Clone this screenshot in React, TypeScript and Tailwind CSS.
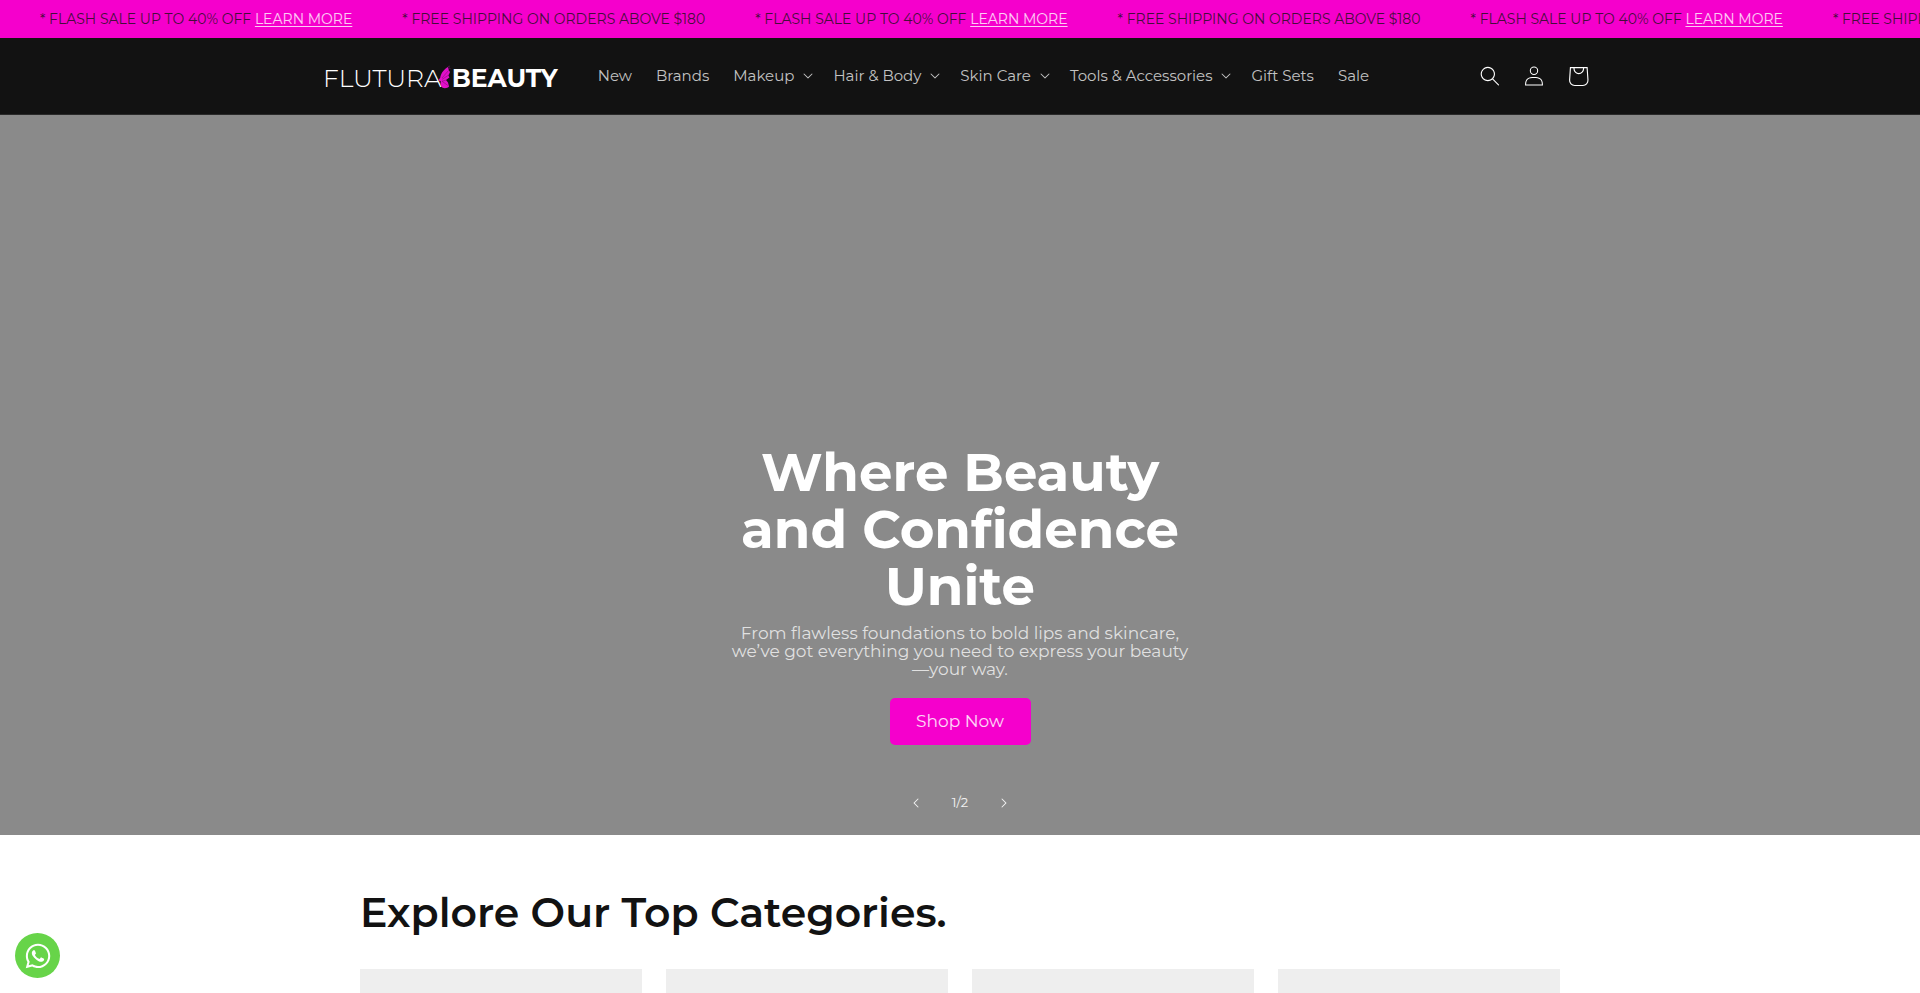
import { FaWhatsapp } from "react-icons/fa";

const menu = [
  { label: "New" },
  { label: "Brands" },
  { label: "Makeup", sub: true },
  { label: "Hair & Body", sub: true },
  { label: "Skin Care", sub: true },
  { label: "Tools & Accessories", sub: true },
  { label: "Gift Sets" },
  { label: "Sale" },
];

function Caret({ className }: { className: string }) {
  return (
    <svg viewBox="0 0 10 6" fill="currentColor" className={className} aria-hidden="true">
      <path
        fillRule="evenodd"
        clipRule="evenodd"
        d="M9.354.646a.5.5 0 00-.708 0L5 4.293 1.354.646a.5.5 0 00-.708.708l4 4a.5.5 0 00.708 0l4-4a.5.5 0 000-.708z"
      />
    </svg>
  );
}

function Ticker() {
  return (
    <div className="flex h-[38px] items-center gap-[50px] overflow-hidden bg-[#f500cc] pl-10 text-sm whitespace-nowrap text-[#121212]/80">
      {[0, 1, 2].map((n) => (
        <div key={n} className="flex shrink-0 gap-[50px]">
          <p>
            * FLASH SALE UP TO 40% OFF{" "}
            <a href="#sale" className="text-white/80 underline underline-offset-2">
              LEARN MORE
            </a>
          </p>
          <p>* FREE SHIPPING ON ORDERS ABOVE $180</p>
        </div>
      ))}
    </div>
  );
}

function Logo() {
  return (
    <a href="#home" className="flex items-center pt-[6px] pl-[3px] text-[25px] text-white" aria-label="Flutura Beauty">
      <span className="font-light">FLUTURA</span>
      <svg viewBox="0 0 14 24" className="-ml-1 mb-1 h-6 w-[14px]" aria-hidden="true">
        <path
          d="M10 2C6.500 4 3 7.500 2.200 12.800L.6 15C1.200 16 2.200 16.400 3 16.200C2 18.500 2.600 21.500 4.600 22.800C7 23.600 9.800 23 11 21.500L10 17.500L8 15L11.400 12.600L10.400 10.400L12 7L10.800 5.200Z"
          fill="#e010c8"
        />
        <path d="M10.500 5.500L4 13M10.200 10.400L4 14.400M8 15L4 16.300L10 20.500" stroke="#7c0b70" strokeWidth=".5" fill="none" />
        <path d="M10 2Q10.500.8 12 1.200M10.500 3Q12 2.500 12.200 3.800" stroke="#8b1380" strokeWidth=".6" fill="none" />
      </svg>
      <span className="font-bold">BEAUTY</span>
    </a>
  );
}

function Header() {
  return (
    <header className="border-b border-[#2a2a2a] bg-[#121212]">
      <div className="mx-auto flex h-[76px] max-w-[1280px] items-center">
        <Logo />
        <nav className="ml-7 flex flex-1 items-center whitespace-nowrap">
          {menu.map((item) =>
            item.sub ? (
              <button key={item.label} type="button" className="flex items-center gap-[9px] pr-2 pl-3 text-[15px] text-white/75">
                {item.label}
                <Caret className="w-[10px]" />
              </button>
            ) : (
              <a key={item.label} href="#menu" className="px-3 text-[15px] text-white/75">
                {item.label}
              </a>
            ),
          )}
        </nav>
        <div className="flex text-white">
          <button type="button" aria-label="Search" className="flex size-11 items-center justify-center">
            <svg viewBox="0 0 18 19" className="size-5" fill="currentColor">
              <path
                fillRule="evenodd"
                clipRule="evenodd"
                d="M11.03 11.68A5.784 5.784 0 112.85 3.5a5.784 5.784 0 018.18 8.18zm.26 1.12a6.78 6.78 0 11.72-.7l5.4 5.4a.5.5 0 11-.71.7l-5.41-5.4z"
              />
            </svg>
          </button>
          <a href="#account" aria-label="Log in" className="flex size-11 items-center justify-center">
            <svg viewBox="0 0 18 19" className="size-5" fill="currentColor">
              <path
                fillRule="evenodd"
                clipRule="evenodd"
                d="M6 4.500a3 3 0 116 0 3 3 0 01-6 0zm3-4a4 4 0 100 8 4 4 0 000-8zm5.580 12.150c1.120.82 1.830 2.240 1.910 4.850H1.510c.08-2.600.79-4.030 1.900-4.850C4.660 11.750 6.500 11.500 9 11.500s4.350.26 5.580 1.150zM9 10.500c-2.500 0-4.650.24-6.170 1.350C1.270 12.980.5 14.930.5 18v.5h17V18c0-3.070-.77-5.020-2.330-6.150-1.520-1.100-3.670-1.350-6.170-1.350z"
              />
            </svg>
          </a>
          <a href="#cart" aria-label="Cart" className="flex size-11 items-center justify-center">
            <svg viewBox="10 10 20.500 20.500" className="size-[23px]" fill="currentColor">
              <path
                fillRule="evenodd"
                d="M15.750 11.800h-3.160l-.77 11.600a5 5 0 0 0 4.990 5.340h7.380a5 5 0 0 0 4.990-5.330L28.400 11.800zm0 1h-2.220l-.71 10.670a4 4 0 0 0 3.990 4.270h7.380a4 4 0 0 0 4-4.270l-.72-10.670h-2.220v.63a4.750 4.750 0 1 1-9.500 0zm8.500 0h-7.500v.63a3.750 3.750 0 1 0 7.500 0z"
              />
            </svg>
          </a>
        </div>
      </div>
    </header>
  );
}

function Hero() {
  return (
    <section className="flex h-[720px] flex-col items-center justify-end bg-[#8a8a8a] text-center">
      <h1 className="w-[472px] text-[53px] leading-[57px] font-bold text-white">Where Beauty and Confidence Unite</h1>
      <p className="mt-[9px] w-[472px] text-[17px] leading-[18px] text-white/75">
        From flawless foundations to bold lips and skincare, we’ve got everything you need to express your beauty
        <wbr />
        <span className="inline-block">—your way.</span>
      </p>
      <a
        href="#shop"
        className="mt-5 flex h-[47px] w-[141px] items-center justify-center rounded-[5px] bg-[#f500cc] text-[17px] text-white/85"
      >
        Shop Now
      </a>
      <div className="mt-9 mb-[10px] flex items-center text-white/90">
        <button type="button" aria-label="Previous slide" className="flex size-11 items-center justify-center">
          <Caret className="w-[10px] rotate-90" />
        </button>
        <span className="w-11 text-[13px]">1/2</span>
        <button type="button" aria-label="Next slide" className="flex size-11 items-center justify-center">
          <Caret className="w-[10px] -rotate-90" />
        </button>
      </div>
    </section>
  );
}

export default function App() {
  return (
    <div className="h-screen overflow-hidden bg-white font-[Montserrat,Inter,sans-serif]">
      <Ticker />
      <Header />
      <main>
        <Hero />
        <section className="mx-auto max-w-[1200px] pt-[51px]">
          <h2 className="text-[41px] leading-[52px] font-semibold text-[#121212]">Explore Our Top Categories.</h2>
          <div className="mt-[31px] grid grid-cols-4 gap-6">
            {[0, 1, 2, 3].map((n) => (
              <div key={n} className="aspect-square bg-[#eeeeee]" />
            ))}
          </div>
        </section>
      </main>
      <a
        href="#chat"
        aria-label="Chat on WhatsApp"
        className="fixed bottom-[15px] left-[15px] flex size-[45px] items-center justify-center rounded-full bg-[#67d449] text-white"
      >
        <FaWhatsapp className="size-7" />
      </a>
    </div>
  );
}
